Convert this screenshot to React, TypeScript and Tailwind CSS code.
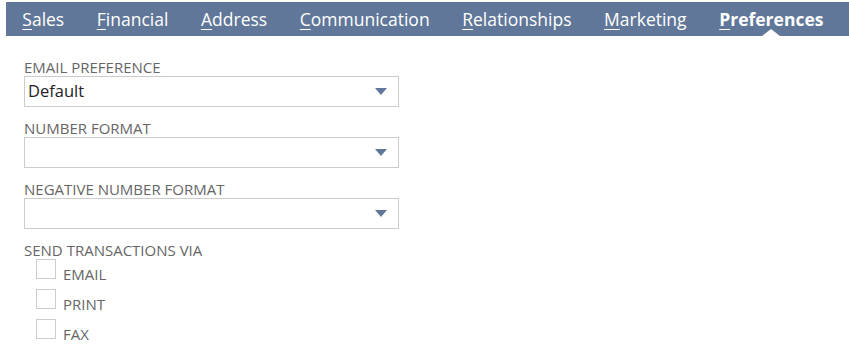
import React from "react";

const tabs = [
  { key: "S", rest: "ales" },
  { key: "F", rest: "inancial" },
  { key: "A", rest: "ddress" },
  { key: "C", rest: "ommunication" },
  { key: "R", rest: "elationships" },
  { key: "M", rest: "arketing" },
  { key: "P", rest: "references", active: true },
];

const Select = ({ label, value }: { label: string; value?: string }) => (
  <div className="flex flex-col">
    <label className="text-[15px] leading-[18px] text-[#666666] uppercase">{label}</label>
    <div className="flex h-[31px] w-[375px] items-center justify-between border border-[#cccccc] bg-white pl-[3px] pr-[11px]">
      <span className="text-[16.5px] text-[#222222]">{value}</span>
      <svg width="12" height="7" viewBox="0 0 12 7">
        <path d="M0 0H12L6 7Z" fill="#607799" />
      </svg>
    </div>
  </div>
);

const Check = ({ label }: { label: string }) => (
  <div className="flex h-[30px] items-start gap-[7px]">
    <span className="h-[20px] w-[20px] border border-[#cccccc] bg-white" />
    <span className="mt-[6px] text-[15px] leading-[18px] text-[#666666]">{label}</span>
  </div>
);

export default function App() {
  return (
    <div className="h-[362px] w-[849px] bg-white pt-[2px] font-['Open_Sans',sans-serif]">
      <div className="ml-[6px] flex h-[34px] items-center bg-[#607799]">
        {tabs.map((t) => (
          <div key={t.key} className="relative flex h-full items-center px-[16.3px]">
            <span className={`text-[17.5px] text-white ${t.active ? "font-bold" : ""}`}>
              <span className="underline underline-offset-[3px] decoration-1">{t.key}</span>
              {t.rest}
            </span>
            {t.active && (
              <svg
                className="absolute bottom-0 left-1/2 -translate-x-1/2"
                width="18"
                height="7"
                viewBox="0 0 18 7"
              >
                <path d="M0 7L9 0L18 7Z" fill="#ffffff" />
              </svg>
            )}
          </div>
        ))}
      </div>
      <div className="flex flex-col gap-[12px] pl-[24px] pt-[22px]">
        <Select label="Email Preference" value="Default" />
        <Select label="Number Format" />
        <Select label="Negative Number Format" />
        <div className="flex flex-col">
          <label className="text-[15px] leading-[18px] text-[#666666]">SEND TRANSACTIONS VIA</label>
          <div className="ml-[12px] flex flex-col">
            <Check label="EMAIL" />
            <Check label="PRINT" />
            <Check label="FAX" />
          </div>
        </div>
      </div>
    </div>
  );
}
